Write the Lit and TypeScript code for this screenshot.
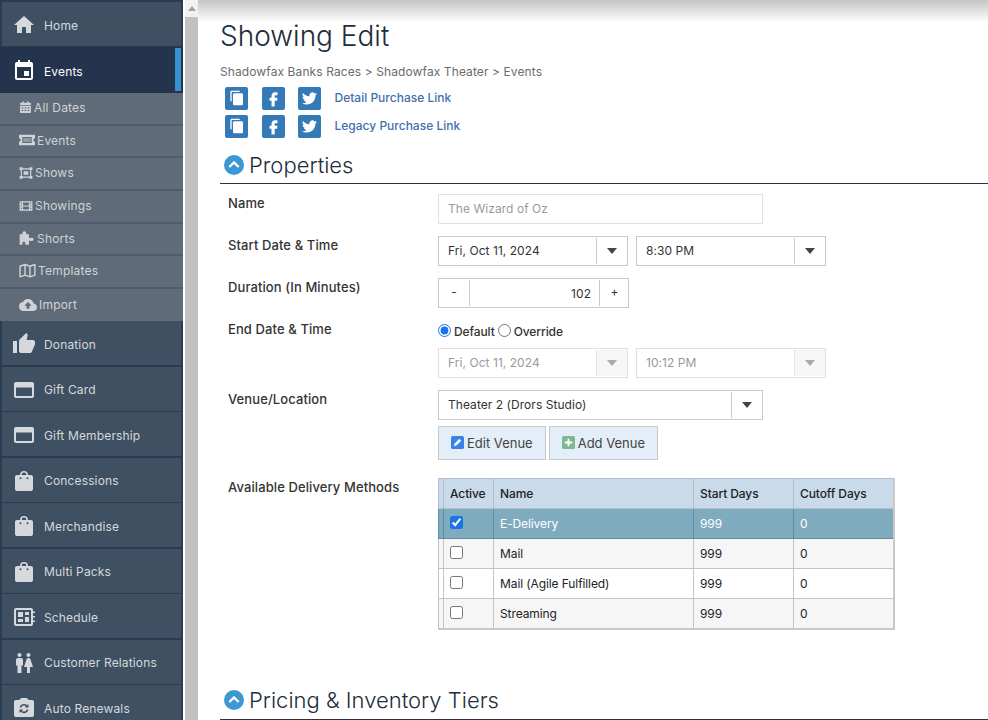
import { LitElement, html, css, svg } from "lit";
import { customElement } from "lit/decorators.js";

const P: Record<string, any> = {
  home: svg`<path d="M10 20v-6h4v6h5v-8h3L12 3 2 12h3v8z"/>`,
  event: svg`<path d="M17 12h-5v5h5v-5zM16 1v2H8V1H6v2H5c-1.11 0-1.99.9-1.99 2L3 19c0 1.1.89 2 2 2h14c1.1 0 2-.9 2-2V5c0-1.1-.9-2-2-2h-1V1h-2zm3 18H5V8h14v11z"/>`,
  thumb: svg`<path d="M1 21h4V9H1v12zm22-11c0-1.1-.9-2-2-2h-6.31l.95-4.57.03-.32c0-.41-.17-.79-.44-1.06L14.17 1 7.59 7.59C7.22 7.95 7 8.45 7 9v10c0 1.1.9 2 2 2h9c.83 0 1.54-.5 1.84-1.22l3.02-7.05c.09-.23.14-.47.14-.73v-2z"/>`,
  card: svg`<path fill-rule="evenodd" d="M20 4H4c-1.11 0-1.99.89-1.99 2L2 18c0 1.11.89 2 2 2h16c1.11 0 2-.89 2-2V6c0-1.11-.89-2-2-2zm0 14H4v-8.500h16V18z"/>`,
  bag: svg`<path fill-rule="evenodd" d="M19 6h-3a4 4 0 0 0-8 0H5c-1.100 0-2 .9-2 2v12c0 1.100.9 2 2 2h14c1.100 0 2-.9 2-2V8c0-1.100-.9-2-2-2zm-7-2.400A2.400 2.400 0 0 1 14.400 6H9.600A2.400 2.400 0 0 1 12 3.600zM8.500 8.200a1 1 0 1 1 0 2 1 1 0 0 1 0-2zm7 0a1 1 0 1 1 0 2 1 1 0 0 1 0-2z"/>`,
  sched: svg`<path fill-rule="evenodd" d="M4 3h15a2 2 0 0 1 2 2v1.500h2V8h-2v3h2v1.500h-2v3h2V17h-2v2a2 2 0 0 1-2 2H4a2 2 0 0 1-2-2V5a2 2 0 0 1 2-2zm0 2v14h15V5H4zm2 2h5v5H6V7zm7 0h4v3h-4V7zm0 5h4v5h-4v-5zm-7 2h5v3H6v-3z"/>`,
  wc: svg`<path d="M5.500 22v-7.500H4V9c0-1.100.9-2 2-2h3c1.100 0 2 .9 2 2v5.500H9.500V22h-4zM18 22v-6h3l-2.540-7.630C18.180 7.550 17.420 7 16.560 7h-.12c-.86 0-1.630.55-1.900 1.370L12 16h3v6h3zM7.500 6c1.110 0 2-.89 2-2s-.89-2-2-2-2 .89-2 2 .89 2 2 2zm9 0c1.110 0 2-.89 2-2s-.89-2-2-2-2 .89-2 2 .89 2 2 2z"/>`,
  renew: svg`<path fill-rule="evenodd" d="M9 2h6l1.800 2H20a2 2 0 0 1 2 2v13a2 2 0 0 1-2 2H4a2 2 0 0 1-2-2V6a2 2 0 0 1 2-2h3.200L9 2zm3 6a4.500 4.500 0 0 0-4.400 3.600h1.700A2.900 2.900 0 0 1 14 10.100L12.800 11.500H16.500V8l-1.300 1.200A4.500 4.500 0 0 0 12 8zm-4.500 5.500V17l1.300-1.200a4.500 4.500 0 0 0 7.600-2.400h-1.700a2.900 2.900 0 0 1-4.700 1.500l1.200-1.400H7.500z"/>`,
  cal: svg`<path fill-rule="evenodd" d="M6 1h3v2h6V1h3v2h3a1 1 0 0 1 1 1v4H2V4a1 1 0 0 1 1-1h3V1zM2 9h20v12a1 1 0 0 1-1 1H3a1 1 0 0 1-1-1V9zm3 2.500V14h3v-2.500H5zm5.500 0V14h3v-2.500h-3zm5.500 0V14h3v-2.500h-3zM5 16v2.500h3V16H5zm5.500 0v2.500h3V16h-3zm5.500 0v2.500h3V16h-3z"/>`,
  ticket: svg`<path fill-rule="evenodd" d="M0 4h24v5.500a2.500 2.500 0 0 0 0 5V20H0v-5.500a2.500 2.500 0 0 0 0-5V4zm5 3.500v9h14v-9H5z"/><rect x="6.500" y="9" width="11" height="6" opacity="0.45"/>`,
  shows: svg`<path fill-rule="evenodd" d="M1 2h5v2h12V2h5v5h-2v10h2v5h-5v-2H6v2H1v-5h2V7H1V2zm5 4v1H5v10h1v1h12v-1h1V7h-1V6H6zm2 3h8v6H8V9z"/>`,
  film: svg`<path fill-rule="evenodd" d="M1 4h22v16H1V4zm2 2v2h2V6H3zm16 0v2h2V6h-2zM7 6v5h10V6H7zM3 10.500v2h2v-2H3zm16 0v2h2v-2h-2zM7 13v5h10v-5H7zm-4 2v2h2v-2H3zm16 0v2h2v-2h-2z"/>`,
  puzzle: svg`<path d="M8 2a3 3 0 0 1 3 3c0 .6-.2 1-.5 1.500H15v6c.6-.6 1.300-1 2.200-1h2.300a2.500 2.500 0 0 1 0 5h-2.300c-.9 0-1.600-.4-2.200-1V22H9.500v-2a2.200 2.200 0 0 0-4.400 0v2H1V6.500h4.500A3 3 0 0 1 8 2z"/>`,
  map: svg`<path fill="none" stroke="currentColor" stroke-width="2" stroke-linejoin="round" d="M1.500 6l7-2.500 7 2.500 7-2.500v15l-7 2.500-7-2.500-7 2.500V6zM8.500 3.500v15M15.500 6v15"/>`,
  upload: svg`<path d="M19.350 10.040A7.490 7.490 0 0 0 12 4C9.110 4 6.600 5.640 5.350 8.040A5.994 5.994 0 0 0 0 14c0 3.310 2.690 6 6 6h13c2.760 0 5-2.240 5-5 0-2.640-2.050-4.780-4.650-4.960zM14 13v4h-4v-4H7l5-5 5 5h-3z"/>`,
  copy: svg`<path d="M16 1H4c-1.100 0-2 .9-2 2v14h2V3h12V1zm3 4H8c-1.100 0-2 .9-2 2v14c0 1.100.9 2 2 2h11c1.100 0 2-.9 2-2V7c0-1.100-.9-2-2-2z"/>`,
  fb: svg`<path d="M14.500 8H17V4.200h-3c-2.800 0-4.500 1.900-4.500 4.600V11H7v3.800h2.500V22h4v-7.200H16.500l.5-3.800h-3.500V9c0-.6.4-1 1-1z"/>`,
  tw: svg`<path d="M23.953 4.570a10 10 0 0 1-2.825.775 4.958 4.958 0 0 0 2.163-2.723c-.951.555-2.005.959-3.127 1.184a4.920 4.920 0 0 0-8.384 4.482C7.690 8.095 4.067 6.130 1.640 3.162a4.822 4.822 0 0 0-.666 2.475c0 1.710.87 3.213 2.188 4.096a4.904 4.904 0 0 1-2.228-.616v.06a4.923 4.923 0 0 0 3.946 4.827 4.996 4.996 0 0 1-2.212.085 4.936 4.936 0 0 0 4.604 3.417 9.867 9.867 0 0 1-6.102 2.105c-.39 0-.779-.023-1.170-.067a13.995 13.995 0 0 0 7.557 2.209c9.053 0 13.998-7.496 13.998-13.985 0-.21 0-.42-.015-.63A9.935 9.935 0 0 0 24 4.590z"/>`,
};
const icon = (n: string) => html`<svg viewBox="0 0 24 24" fill="currentColor" class=${"i-" + n}>${P[n]}</svg>`;

const subs: [string, string, number][] = [["cal","All Dates",13],["ticket","Events",16],["shows","Shows",14],["film","Showings",14],["puzzle","Shorts",16],["map","Templates",17],["upload","Import",18]];
const mains = [["thumb","Donation"],["card","Gift Card"],["card","Gift Membership"],["bag","Concessions"],["bag","Merchandise"],["bag","Multi Packs"],["sched","Schedule"],["wc","Customer Relations"],["renew","Auto Renewals"]];
const rows = [["E-Delivery",true],["Mail",false],["Mail (Agile Fulfilled)",false],["Streaming",false]] as [string, boolean][];

@customElement("app-root")
export class AppRoot extends LitElement {
  static styles = css`
    :host { display: flex; width: 988px; height: 720px; overflow: hidden; background: #fff; color: #333;
      font-family: "Inter", "Liberation Sans", sans-serif; font-size: 12px; letter-spacing: -0.1px; }
    * { box-sizing: border-box; }
    .side { width: 183px; flex: none; background: #2a3b52; padding-top: 2px; display: flex; flex-direction: column; color: #d5d8dc; letter-spacing: 0.15px; }
    .m { height: 44px; margin: 0 2px 1.500px; padding-top: 2px; flex: none; background: #3f5062; display: flex; align-items: center; }
    .m svg { width: 24px; height: 24px; margin-left: 10px; flex: none; }
    .m span { margin-left: 8px; }
    .m:first-child { margin-bottom: 1px; }
    .m.active { margin: 0; height: 46px; background: #24344d; color: #fff; position: relative; }
    .m.active::after { content: ""; position: absolute; right: 2px; top: 1px; bottom: 2px; width: 6px; background: #3591d1; }
    .m.active svg { margin-left: 12px; }
    .subs { background: #5f6b78; height: 228px; flex: none; color: #cfd3d7; letter-spacing: 0.2px; overflow: hidden; }
    .s { height: 32.670px; border-bottom: 2px solid #4e5b6b; padding-bottom: 1.500px; display: flex; align-items: center; padding-left: 19px; gap: 2px; }
    .s:last-child { border-bottom: 0; }
    .si { display: flex; align-items: center; flex: none; }
    .si svg { width: 100%; height: auto; display: block; }
    .scroll { flex: none; margin-left: 2px; background: #c1c1c1; display: flex; flex-direction: column; width: 13px; }
    .arrow { height: 17px; background: #f1f1f1; display: flex; align-items: center; justify-content: center; }
    .arrow i { border: 4px solid transparent; border-bottom: 5px solid #a3a3a3; border-top: 0; width: 0; height: 0; display: block; }
    .main { flex: 1; min-width: 0; position: relative; padding: 21px 0 0 22px; }
    .shade { position: absolute; left: 0; right: 0; top: 0; height: 22px; background: linear-gradient(#c4c4c4, #ffffff); }
    h1 { position: relative; font-weight: 300; font-size: 28px; line-height: 30px; margin: 0; color: #222c3a; letter-spacing: 0; }
    .crumb { margin-top: 13px; height: 16px; line-height: 16px; color: #6b6b6b; letter-spacing: 0.1px; }
    .links { margin-top: 4px; padding-left: 5px; margin-bottom: 11px; }
    .lrow { height: 28px; display: flex; align-items: center; }
    .sq { width: 23px; height: 23px; background: #337ab7; border-radius: 2px; color: #fff; margin-right: 13.500px; display: flex; align-items: center; justify-content: center; }
    .sq svg { width: 16px; height: 16px; }
    .sq .i-fb { width: 19px; height: 19px; }
    .sq .i-tw { width: 15px; height: 15px; }
    .lrow a { color: #3f6fad; position: relative; top: -1px; font-weight: 500; letter-spacing: 0; }
    h2 { font-weight: 300; font-size: 22px; line-height: 28px; margin: 0; display: flex; align-items: center; gap: 5px; color: #222c3a; border-bottom: 1px solid #2c3240; height: 33px; padding: 0 0 5px 4px; letter-spacing: 0; }
    .circle { width: 20px; height: 20px; border-radius: 50%; background: #3d97d3; display: flex; align-items: center; justify-content: center; }
    .circle svg { width: 16px; height: 16px; fill: none; stroke: #fff; stroke-width: 3.400; }
    .props { margin-top: 10px; padding-left: 8px; display: grid; grid-template-columns: 210px 1fr; row-gap: 12px; }
    .lab { font-size: 13px; font-weight: 500; color: #333; padding-top: 2px; line-height: 15px; letter-spacing: 0.1px; }
    .table-lab, .table-wrap { margin-top: -12px; }
    .ctl { display: flex; gap: 8px; }
    .box { height: 30px; border: 1px solid #c9c9c9; background: #fff; display: flex; align-items: center; color: #333; letter-spacing: 0.05px; }
    .box .t { flex: 1; padding-left: 9px; padding-bottom: 2px; white-space: nowrap; }
    .box .b { width: 31px; height: 26px; border-left: 1px solid #c9c9c9; display: flex; align-items: center; justify-content: center; flex: none; }
    .box .b i { display: block; width: 0; height: 0; border: 5.500px solid transparent; border-top: 6px solid #444; border-bottom: 0; }
    .box.dis { border-color: #e0e0e0; color: #9a9a9a; }
    .box.dis .b { border-left-color: #e6e6e6; background: #f6f6f6; }
    .box.dis .b i { border-top-color: #aaa; }
    .w325 { width: 325px; } .w190 { width: 190px; } .w191 { width: 191px; }
    .num .b1 { width: 31px; height: 26px; border-right: 1px solid #c9c9c9; text-align: center; line-height: 24px; }
    .num .v { flex: 1; text-align: right; padding-right: 8px; }
    .num .b2 { width: 29px; height: 26px; border-left: 1px solid #c9c9c9; text-align: center; line-height: 24px; padding-left: 1px; }
    .radios { display: flex; align-items: center; height: 16px; font-weight: 500; margin-top: 3px; margin-bottom: 9px; }
    .radios input { width: 13px; height: 13px; margin: 0 3px 2px 0; accent-color: #1a73e8; }
    .radios label { margin-right: 3px; display: flex; align-items: center; }
    .btns { display: flex; gap: 3px; margin-top: 6px; margin-bottom: 18px; }
    .btn { height: 34px; border: 1px solid #c9c9c9; background: #e3eef8; color: #444; display: flex; align-items: center; padding: 0 12px 1px; gap: 3px; font-size: 13px; letter-spacing: 0; }
    .btn svg { width: 13px; height: 13px; flex: none; }
    .tbl { border-collapse: collapse; table-layout: fixed; width: 456px; border: 1px solid #c9c9c9; border-right-width: 2px; border-bottom-width: 2px; }
    .tbl td, .tbl th { border: 1px solid #c4c4c4; padding: 0 0 0 6px; height: 30px; text-align: left; font-weight: 400; color: #222; overflow: hidden; white-space: nowrap; }
    .tbl th { background: #c9dbeb; font-weight: 500; border-color: #b4bfcb; }
    .tbl td { background: #fff; }
    .tbl tr:nth-child(even) td { background: #f6f6f6; }
    .tbl tr.sel td { background: #7fabbf; color: #fff; border-color: #5f8ca3; }
    .tbl input { width: 13px; height: 13px; margin: 0; display: block; accent-color: #1a73e8; position: relative; top: -1px; }
    .c0 { width: 5px; padding: 0 !important; } .c1 { width: 50px; } .c2 { width: 200px; } .c3 { width: 100px; } .c4 { width: 100px; }
    .second { margin-top: 57px; }
  `;

  render() {
    return html`
      <nav class="side">
        <div class="m">${icon("home")}<span>Home</span></div>
        <div class="m active">${icon("event")}<span>Events</span></div>
        <div class="subs">${subs.map(([i, t, w]) => html`<div class="s"><span class="si" style="width:${w}px">${icon(i)}</span><span>${t}</span></div>`)}</div>
        ${mains.map(([i, t]) => html`<div class="m">${icon(i)}<span>${t}</span></div>`)}
      </nav>
      <div class="scroll"><div class="arrow"><i></i></div></div>
      <main class="main">
        <div class="shade"></div>
        <h1>Showing Edit</h1>
        <div class="crumb">Shadowfax Banks Races &gt; Shadowfax Theater &gt; Events</div>
        <div class="links">
          ${["Detail Purchase Link", "Legacy Purchase Link"].map((l) => html`<div class="lrow">
            <div class="sq">${icon("copy")}</div><div class="sq">${icon("fb")}</div><div class="sq">${icon("tw")}</div>
            <a>${l}</a></div>`)}
        </div>
        <h2><span class="circle"><svg viewBox="0 0 24 24"><path d="M5 15l7-7 7 7"/></svg></span>Properties</h2>
        <div class="props">
          <div class="lab">Name</div>
          <div class="ctl"><div class="box dis w325"><span class="t">The Wizard of Oz</span></div></div>
          <div class="lab">Start Date &amp; Time</div>
          <div class="ctl">
            <div class="box w190"><span class="t">Fri, Oct 11, 2024</span><span class="b"><i></i></span></div>
            <div class="box w190"><span class="t">8:30 PM</span><span class="b"><i></i></span></div>
          </div>
          <div class="lab">Duration (In Minutes)</div>
          <div class="ctl"><div class="box num w191"><span class="b1">-</span><span class="v">102</span><span class="b2">+</span></div></div>
          <div class="lab">End Date &amp; Time</div>
          <div>
            <div class="radios">
              <label><input type="radio" name="e" checked />Default</label>
              <label><input type="radio" name="e" />Override</label>
            </div>
            <div class="ctl">
              <div class="box dis w190"><span class="t">Fri, Oct 11, 2024</span><span class="b"><i></i></span></div>
              <div class="box dis w190"><span class="t">10:12 PM</span><span class="b"><i></i></span></div>
            </div>
          </div>
          <div class="lab">Venue/Location</div>
          <div>
            <div class="box w325"><span class="t">Theater 2 (Drors Studio)</span><span class="b"><i></i></span></div>
            <div class="btns">
              <div class="btn"><svg viewBox="0 0 14 14"><rect width="14" height="14" rx="2" fill="#3b82e8"/><path d="M3 11l1-3 5-5 2 2-5 5z" fill="#fff"/></svg>Edit Venue</div>
              <div class="btn"><svg viewBox="0 0 14 14"><rect width="14" height="14" rx="2" fill="#7fb88f"/><path d="M6 3h2v3h3v2H8v3H6V8H3V6h3z" fill="#fff"/></svg>Add Venue</div>
            </div>
          </div>
          <div class="lab table-lab">Available Delivery Methods</div>
          <div class="table-wrap">
            <table class="tbl">
              <colgroup><col class="c0" /><col class="c1" /><col class="c2" /><col class="c3" /><col class="c4" /></colgroup>
              <thead><tr><th class="c0"></th><th>Active</th><th>Name</th><th>Start Days</th><th>Cutoff Days</th></tr></thead>
              <tbody>
                ${rows.map(([n, a]) => html`<tr class=${a ? "sel" : ""}><td class="c0"></td><td><input type="checkbox" .checked=${a} /></td><td>${n}</td><td>999</td><td>0</td></tr>`)}
              </tbody>
            </table>
          </div>
        </div>
        <h2 class="second"><span class="circle"><svg viewBox="0 0 24 24"><path d="M5 15l7-7 7 7"/></svg></span>Pricing &amp; Inventory Tiers</h2>
      </main>
    `;
  }
}
